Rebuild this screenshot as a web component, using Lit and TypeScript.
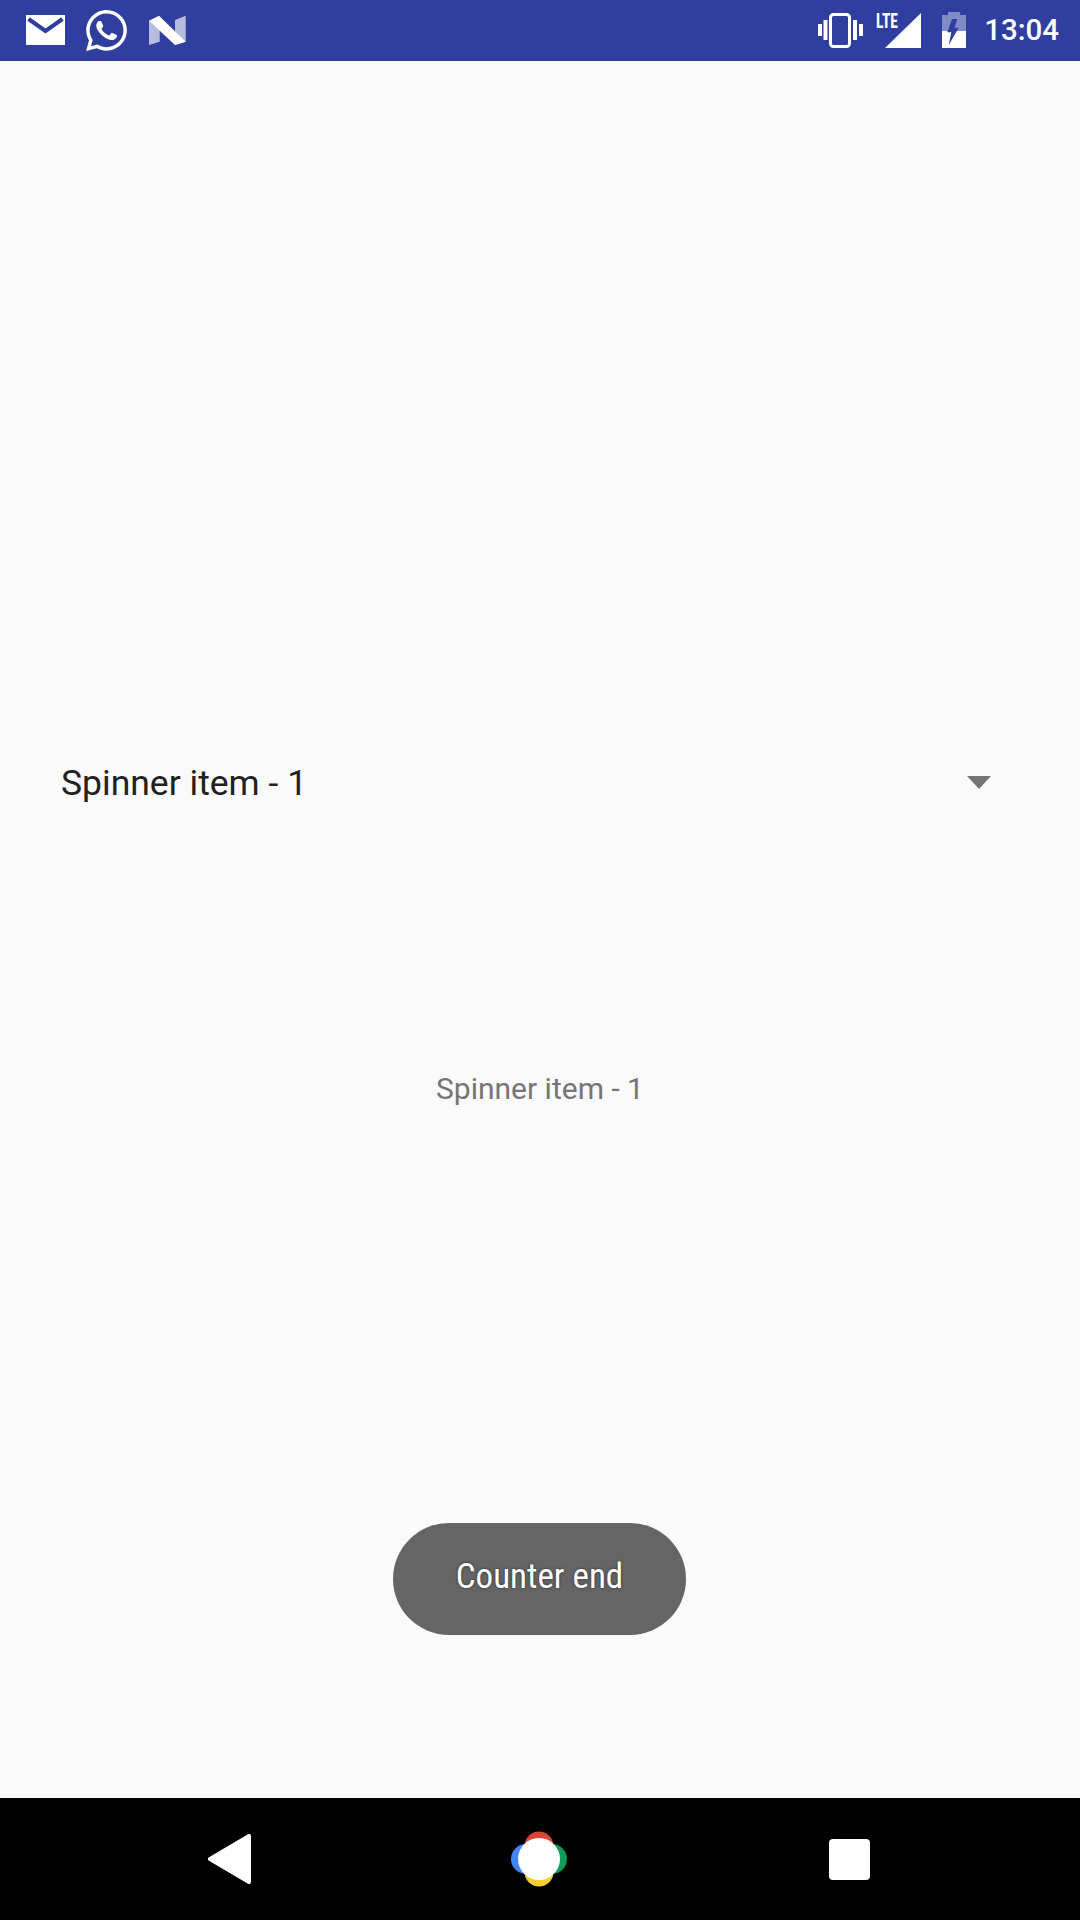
import { LitElement, html, css } from 'lit';
import { customElement } from 'lit/decorators.js';

//
// status bar glyphs, coordinates read off the reference
//
const mailIcon = html`<svg class="mail" width="39" height="30" viewBox="0 0 39 30">
  <path fill="#fff" d="M0 0H39V30H0Z"/>
  <path fill="none" stroke="#303f9f" stroke-width="4" d="M2.500 4L19.500 16L36.500 4"/>
</svg>`;

const whatsappIcon = html`<svg class="whatsapp" width="41" height="41" viewBox="2 2 20 20">
  <path fill="#fff" d="M12.04 2C6.58 2 2.13 6.45 2.13 11.91C2.13 13.66 2.59 15.36 3.45 16.86L2.05 22L7.3 20.62C8.75 21.41 10.38 21.83 12.04 21.83C17.5 21.83 21.95 17.38 21.95 11.92C21.95 9.27 20.92 6.78 19.05 4.91C17.18 3.03 14.69 2 12.04 2M12.05 3.67C14.25 3.67 16.31 4.53 17.87 6.09C19.42 7.65 20.28 9.72 20.28 11.92C20.28 16.46 16.58 20.15 12.04 20.15C10.56 20.15 9.11 19.76 7.85 19L7.55 18.83L4.43 19.65L5.26 16.61L5.06 16.29C4.24 15 3.8 13.47 3.8 11.91C3.81 7.37 7.5 3.67 12.05 3.67M8.53 7.33C8.37 7.33 8.1 7.39 7.87 7.64C7.65 7.89 7 8.5 7 9.71C7 10.93 7.89 12.1 8 12.27C8.14 12.44 9.76 14.94 12.25 16C12.84 16.27 13.3 16.42 13.66 16.53C14.25 16.72 14.79 16.69 15.22 16.63C15.7 16.56 16.68 16.03 16.89 15.45C17.1 14.87 17.1 14.38 17.04 14.27C16.97 14.17 16.81 14.11 16.56 14C16.31 13.86 15.09 13.26 14.87 13.18C14.64 13.1 14.5 13.06 14.31 13.3C14.15 13.55 13.67 14.11 13.53 14.27C13.38 14.44 13.24 14.46 13 14.34C12.74 14.21 11.94 13.95 11 13.11C10.26 12.45 9.77 11.64 9.62 11.39C9.5 11.15 9.61 11 9.73 10.89C9.84 10.78 10 10.6 10.1 10.45C10.23 10.31 10.27 10.2 10.35 10.04C10.43 9.87 10.39 9.73 10.33 9.61C10.27 9.5 9.77 8.26 9.56 7.77C9.36 7.29 9.16 7.35 9 7.34C8.86 7.34 8.7 7.33 8.53 7.33Z"/>
</svg>`;

const nougatIcon = html`<svg class="nougat" width="37" height="30" viewBox="0 0 37 30">
  <path fill="#fff" fill-opacity=".65" d="M0 5.700L10.700 6V26.700L0 30ZM26 5L36.700 .7V26.700L26 30Z"/>
  <path fill="#fff" d="M0 5.700L10 .7L36.700 26.700L26 30Z"/>
</svg>`;

const vibrateIcon = html`<svg class="vibrate" width="45" height="36" viewBox="0 0 45 36">
  <rect x="12.500" y="2.500" width="19" height="32" rx="3" fill="none" stroke="#fff" stroke-width="3"/>
  <path fill="#fff" d="M0 12H4V24H0ZM5.500 8H9.500V28H5.500ZM35 8H39V28H35ZM41 12H45V24H41Z"/>
</svg>`;

// taller than the triangle so the LTE label's line box fits inside the svg
const signalIcon = html`<svg class="signal" width="45" height="44" viewBox="0 -4 45 44">
  <path fill="#fff" d="M45 1V36H9Z"/>
  <text class="lte" x="0" y="16" textLength="22" lengthAdjust="spacingAndGlyphs">LTE</text>
</svg>`;

const batteryIcon = html`<svg class="battery" width="24" height="36" viewBox="0 0 24 36">
  <path fill="#fff" fill-opacity=".4" d="M6 0H18V3H24V19H0V3H6Z"/>
  <path fill="#fff" d="M0 19H24V36H0Z"/>
  <path fill="#303f9f" d="M10 7H15.300L12.700 15.700H16.700L6.700 33L9.300 20.300H5.300Z"/>
</svg>`;

@customElement('app-root')
export class AppRoot extends LitElement {
  static styles = css`
    :host {
      display: flex;
      flex-direction: column;
      position: relative;
      width: 1080px;
      height: 1920px;
      background: #fafafa;
      font-family: Roboto, "Liberation Sans", sans-serif;
    }

    /* status bar */
    .status {
      flex: none;
      height: 61px;
      box-sizing: border-box;
      display: flex;
      align-items: center;
      justify-content: space-between;
      padding: 0 21px 1px 26px;
      background: #303f9f;
      color: #fff;
    }
    .status svg { display: block; }
    .left, .right { display: flex; align-items: center; }
    .left { gap: 21px; }
    .whatsapp { margin-top: 1px; }
    .nougat { margin-left: 1px; }
    .signal { margin-left: 13px; }
    .battery { margin-left: 21px; }
    .lte {
      font-family: Roboto, sans-serif;
      font-size: 20px;
      font-stretch: 75%;
      font-weight: 700;
      fill: #fff;
    }
    .time {
      margin-left: 18px;
      font-size: 29.500px;
      font-weight: 500;
      line-height: 32px;
    }

    /* content */
    .main {
      flex: 1;
      display: flex;
      flex-direction: column;
      padding-top: 690px;
    }
    .spinner {
      display: flex;
      align-items: center;
      justify-content: space-between;
      height: 64px;
      padding: 0 89px 0 61px;
    }
    .spinner-text {
      font-size: 35.500px;
      color: #212121;
    }
    .arrow {
      width: 0;
      height: 0;
      margin-bottom: 2px;
      border-left: 12.500px solid transparent;
      border-right: 12.500px solid transparent;
      border-top: 13px solid #757575;
    }
    .selected {
      margin-top: 254px;
      text-align: center;
      font-size: 30px;
      line-height: 40px;
      color: #757575;
    }

    /* toast floats over the content */
    .toast {
      position: absolute;
      left: 393px;
      top: 1523px;
      width: 293px;
      height: 112px;
      display: flex;
      align-items: center;
      justify-content: center;
      border-radius: 56px;
      background: #656565;
      color: #fff;
      font-size: 35px;
      font-stretch: 75%;
      text-shadow: 0 0 3px rgba(0, 0, 0, .6);
    }
    .toast span { display: block; margin-bottom: 6px; white-space: nowrap; }

    /* nav bar */
    .nav {
      flex: none;
      height: 122px;
      display: flex;
      align-items: center;
      background: #000;
      padding-left: 208px;
    }
    .nav svg { display: block; }
    .home { margin-left: 259px; }
    .recent {
      width: 41px;
      height: 41px;
      margin-left: 262px;
      border-radius: 4px;
      background: #fff;
    }
  `;

  render() {
    return html`
      <div class="status">
        <div class="left">${mailIcon}${whatsappIcon}${nougatIcon}</div>
        <div class="right">
          ${vibrateIcon}${signalIcon}${batteryIcon}
          <div class="time">13:04</div>
        </div>
      </div>
      <div class="main">
        <div class="spinner">
          <div class="spinner-text">Spinner item - 1</div>
          <div class="arrow"></div>
        </div>
        <div class="selected">Spinner item - 1</div>
      </div>
      <div class="toast"><span>Counter end</span></div>
      <div class="nav">
        <svg class="back" width="44" height="50" viewBox="0 0 44 50">
          <path fill="#fff" stroke="#fff" stroke-width="4" stroke-linejoin="round" d="M2 25L41 2V48Z"/>
        </svg>
        <svg class="home" width="56" height="56" viewBox="0 0 56 56">
          <circle cx="28" cy="15" r="14.500" fill="#db4437"/>
          <circle cx="28" cy="41" r="14.500" fill="#f4d133"/>
          <circle cx="15" cy="28" r="15" fill="#4285f4"/>
          <circle cx="41" cy="28" r="15" fill="#0f9d58"/>
          <circle cx="28" cy="28" r="21" fill="#fff"/>
        </svg>
        <div class="recent"></div>
      </div>
    `;
  }
}
